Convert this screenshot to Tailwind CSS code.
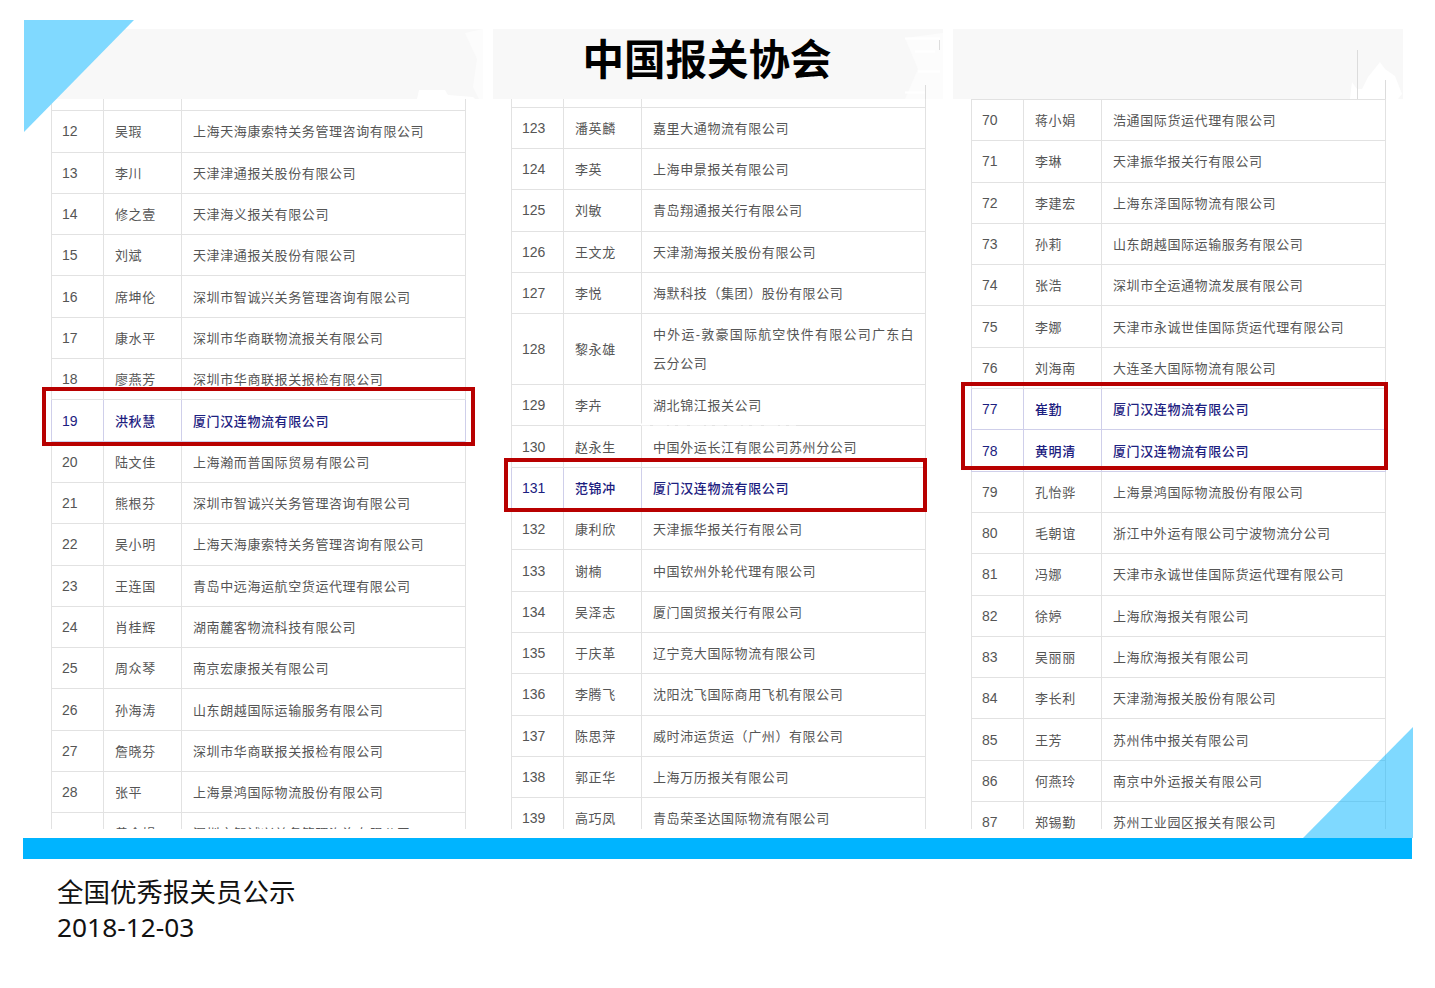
<!DOCTYPE html>
<html lang="zh-CN">
<head>
  <meta charset="UTF-8" />
  <title>全国优秀报关员公示</title>
  <script src="https://cdn.jsdelivr.net/npm/@tailwindcss/browser@4"></script>
</head>
<body class="bg-white">
  <div class="relative w-[1435px] h-[988px] overflow-hidden bg-white font-['Liberation_Sans','Noto_Sans_CJK_SC',sans-serif]">

    <!-- Header bands -->
    <div class="flex gap-[10px] pt-[29px] pl-[33px]">
      <div class="relative w-[450px] h-[70px] bg-[#f8f8f8]">
        <svg class="absolute left-0 top-0" width="450" height="70"><polygon points="384,70 386,61 412,61 415,66 440,68 442,70" fill="#fff"/><polygon points="432,4 450,0 450,70 446,70 440,58 444,30" fill="#fcfcfc"/></svg>
      </div>
      <div class="relative w-[450px] h-[70px] bg-[#f8f8f8] flex items-center justify-center pr-[22px] pb-[14px]">
        <h1 class="text-[41.5px] leading-[62px] font-bold text-black font-['Noto_Sans_CJK_SC',sans-serif]">中国报关协会</h1>
        <svg class="absolute left-0 top-0" width="450" height="70"><polygon points="412,9 450,4 450,70 412,70 425,40" fill="#fcfcfc"/><path d="M412 9.5h35M422 22.5h20M425 42.5h22M412 63.5h20" stroke="#fff" stroke-width="2" fill="none"/><path d="M446.5 11v10M432.5 56v14" stroke="#dcdcdc" fill="none"/></svg>
      </div>
      <div class="relative w-[450px] h-[70px] bg-[#f8f8f8]">
        <svg class="absolute left-0 top-0" width="450" height="70"><polygon points="397,70 399,53 404,60 409,60 415,48 427,33 432,40 442,47 449,65 445,70" fill="#fff"/><path d="M404.5 21v49M432.5 51v19" stroke="#dcdcdc" fill="none"/></svg>
      </div>
    </div>

    <!-- Three name lists -->
    <div class="flex gap-[45px] pl-[51px] text-[13px] tracking-[0.6px] text-[#555]">
      <div class="w-[415px] h-[729.5px] overflow-hidden">
        <table class="-mt-[30px] w-[415px] table-fixed border-collapse [&_tr]:h-[41.3px] [&_td]:border [&_td]:border-[#e2e2e2] [&_td]:px-[11px] [&_td]:pt-px [&_td]:leading-[29px] [&_td:first-child]:pl-[10px] [&_td:first-child]:text-[14px] [&_td:first-child]:tracking-normal">
          <colgroup><col class="w-[52px]"/><col class="w-[78px]"/><col/></colgroup>
          <tbody>
            <tr><td></td><td></td><td></td></tr>
            <tr><td>12</td><td>吴瑕</td><td>上海天海康索特关务管理咨询有限公司</td></tr>
            <tr><td>13</td><td>李川</td><td>天津津通报关股份有限公司</td></tr>
            <tr><td>14</td><td>修之壹</td><td>天津海义报关有限公司</td></tr>
            <tr><td>15</td><td>刘斌</td><td>天津津通报关股份有限公司</td></tr>
            <tr><td>16</td><td>席坤伦</td><td>深圳市智诚兴关务管理咨询有限公司</td></tr>
            <tr><td>17</td><td>康水平</td><td>深圳市华商联物流报关有限公司</td></tr>
            <tr><td>18</td><td>廖燕芳</td><td>深圳市华商联报关报检有限公司</td></tr>
            <tr class="text-[#1c2080] font-medium [&>td]:border-[#cfcfea]!"><td>19</td><td>洪秋慧</td><td>厦门汉连物流有限公司</td></tr>
            <tr><td>20</td><td>陆文佳</td><td>上海瀚而普国际贸易有限公司</td></tr>
            <tr><td>21</td><td>熊根芬</td><td>深圳市智诚兴关务管理咨询有限公司</td></tr>
            <tr><td>22</td><td>吴小明</td><td>上海天海康索特关务管理咨询有限公司</td></tr>
            <tr><td>23</td><td>王连国</td><td>青岛中远海运航空货运代理有限公司</td></tr>
            <tr><td>24</td><td>肖桂辉</td><td>湖南麓客物流科技有限公司</td></tr>
            <tr><td>25</td><td>周众琴</td><td>南京宏康报关有限公司</td></tr>
            <tr><td>26</td><td>孙海涛</td><td>山东朗越国际运输服务有限公司</td></tr>
            <tr><td>27</td><td>詹晓芬</td><td>深圳市华商联报关报检有限公司</td></tr>
            <tr><td>28</td><td>张平</td><td>上海景鸿国际物流股份有限公司</td></tr>
            <tr><td></td><td>黄金娟</td><td>深圳市智诚兴关务管理咨询有限公司</td></tr>
          </tbody>
        </table>
      </div>

      <div class="relative w-[415px] h-[729.5px] overflow-hidden">
        <table class="-mt-[33.6px] w-[415px] table-fixed border-collapse [&_tr]:h-[41.3px] [&_td]:border [&_td]:border-[#e2e2e2] [&_td]:px-[11px] [&_td]:pt-px [&_td]:leading-[29px] [&_td:first-child]:pl-[10px] [&_td:first-child]:text-[14px] [&_td:first-child]:tracking-normal">
          <colgroup><col class="w-[52px]"/><col class="w-[78px]"/><col/></colgroup>
          <tbody>
            <tr><td></td><td></td><td></td></tr>
            <tr><td>123</td><td>潘英麟</td><td>嘉里大通物流有限公司</td></tr>
            <tr><td>124</td><td>李英</td><td>上海申景报关有限公司</td></tr>
            <tr><td>125</td><td>刘敏</td><td>青岛翔通报关行有限公司</td></tr>
            <tr><td>126</td><td>王文龙</td><td>天津渤海报关股份有限公司</td></tr>
            <tr><td>127</td><td>李悦</td><td>海默科技（集团）股份有限公司</td></tr>
            <tr><td>128</td><td>黎永雄</td><td class="pt-[6px]! pb-[6px] text-justify">中外运-敦豪国际航空快件有限公司广东白云分公司</td></tr>
            <tr><td>129</td><td>李卉</td><td>湖北锦江报关公司</td></tr>
            <tr><td>130</td><td>赵永生</td><td>中国外运长江有限公司苏州分公司</td></tr>
            <tr class="text-[#1c2080] font-medium [&>td]:border-[#cfcfea]!"><td>131</td><td>范锦冲</td><td>厦门汉连物流有限公司</td></tr>
            <tr><td>132</td><td>康利欣</td><td>天津振华报关行有限公司</td></tr>
            <tr><td>133</td><td>谢楠</td><td>中国钦州外轮代理有限公司</td></tr>
            <tr><td>134</td><td>吴泽志</td><td>厦门国贸报关行有限公司</td></tr>
            <tr><td>135</td><td>于庆革</td><td>辽宁竞大国际物流有限公司</td></tr>
            <tr><td>136</td><td>李腾飞</td><td>沈阳沈飞国际商用飞机有限公司</td></tr>
            <tr><td>137</td><td>陈思萍</td><td>威时沛运货运（广州）有限公司</td></tr>
            <tr><td>138</td><td>郭正华</td><td>上海万历报关有限公司</td></tr>
            <tr><td>139</td><td>高巧凤</td><td>青岛荣圣达国际物流有限公司</td></tr>
          </tbody>
        </table>
        <svg class="absolute left-[130px] top-[324px]" width="160" height="4"><path d="M0 1.5h155" stroke="#fff" stroke-width="2" stroke-dasharray="9 3 14 2 6 3" fill="none"/></svg>
      </div>

      <div class="w-[415px] h-[729.5px] overflow-hidden">
        <table class="w-[415px] table-fixed border-collapse [&_tr]:h-[41.3px] [&_td]:border [&_td]:border-[#e2e2e2] [&_td]:px-[11px] [&_td]:pt-px [&_td]:leading-[29px] [&_td:first-child]:pl-[10px] [&_td:first-child]:text-[14px] [&_td:first-child]:tracking-normal">
          <colgroup><col class="w-[52px]"/><col class="w-[78px]"/><col/></colgroup>
          <tbody>
            <tr><td>70</td><td>蒋小娟</td><td>浩通国际货运代理有限公司</td></tr>
            <tr><td>71</td><td>李琳</td><td>天津振华报关行有限公司</td></tr>
            <tr><td>72</td><td>李建宏</td><td>上海东泽国际物流有限公司</td></tr>
            <tr><td>73</td><td>孙莉</td><td>山东朗越国际运输服务有限公司</td></tr>
            <tr><td>74</td><td>张浩</td><td>深圳市全运通物流发展有限公司</td></tr>
            <tr><td>75</td><td>李娜</td><td>天津市永诚世佳国际货运代理有限公司</td></tr>
            <tr><td>76</td><td>刘海南</td><td>大连圣大国际物流有限公司</td></tr>
            <tr class="text-[#1c2080] font-medium [&>td]:border-[#cfcfea]!"><td>77</td><td>崔勤</td><td>厦门汉连物流有限公司</td></tr>
            <tr class="text-[#1c2080] font-medium [&>td]:border-[#cfcfea]!"><td>78</td><td>黄明清</td><td>厦门汉连物流有限公司</td></tr>
            <tr><td>79</td><td>孔怡骅</td><td>上海景鸿国际物流股份有限公司</td></tr>
            <tr><td>80</td><td>毛朝谊</td><td>浙江中外运有限公司宁波物流分公司</td></tr>
            <tr><td>81</td><td>冯娜</td><td>天津市永诚世佳国际货运代理有限公司</td></tr>
            <tr><td>82</td><td>徐婷</td><td>上海欣海报关有限公司</td></tr>
            <tr><td>83</td><td>吴丽丽</td><td>上海欣海报关有限公司</td></tr>
            <tr><td>84</td><td>李长利</td><td>天津渤海报关股份有限公司</td></tr>
            <tr><td>85</td><td>王芳</td><td>苏州伟中报关有限公司</td></tr>
            <tr><td>86</td><td>何燕玲</td><td>南京中外运报关有限公司</td></tr>
            <tr><td>87</td><td>郑锡勤</td><td>苏州工业园区报关有限公司</td></tr>
          </tbody>
        </table>
      </div>
    </div>

    <!-- Footer bar and caption -->
    <div class="ml-[23px] mt-[9.5px] w-[1389px] h-[21px] bg-[#00b4ff]"></div>
    <div class="pl-[57px] pt-[13px] text-[#111] font-['Noto_Sans',sans-serif]">
      <p class="text-[26.5px] leading-[38px] font-['Noto_Sans_CJK_SC',sans-serif]">全国优秀报关员公示</p>
      <p class="text-[26.3px] leading-[34px]">2018-12-03</p>
    </div>

    <!-- Corner triangles -->
    <svg class="absolute left-[24px] top-[20px]" width="110" height="112"><polygon points="0,0 110,0 0,112" fill="#80d9ff"/></svg>
    <svg class="absolute left-[1303px] top-[727px]" width="110" height="111"><polygon points="110,0 110,111 0,111" fill="#00b4ff" fill-opacity="0.5"/></svg>

    <!-- Red highlight frames -->
    <div class="absolute left-[42px] top-[387px] w-[433px] h-[59px] border-4 border-[#b80000]"></div>
    <div class="absolute left-[504px] top-[458px] w-[423px] h-[54px] border-4 border-[#b80000]"></div>
    <div class="absolute left-[961px] top-[382px] w-[427px] h-[88px] border-4 border-[#b80000]"></div>
  </div>
</body>
</html>
